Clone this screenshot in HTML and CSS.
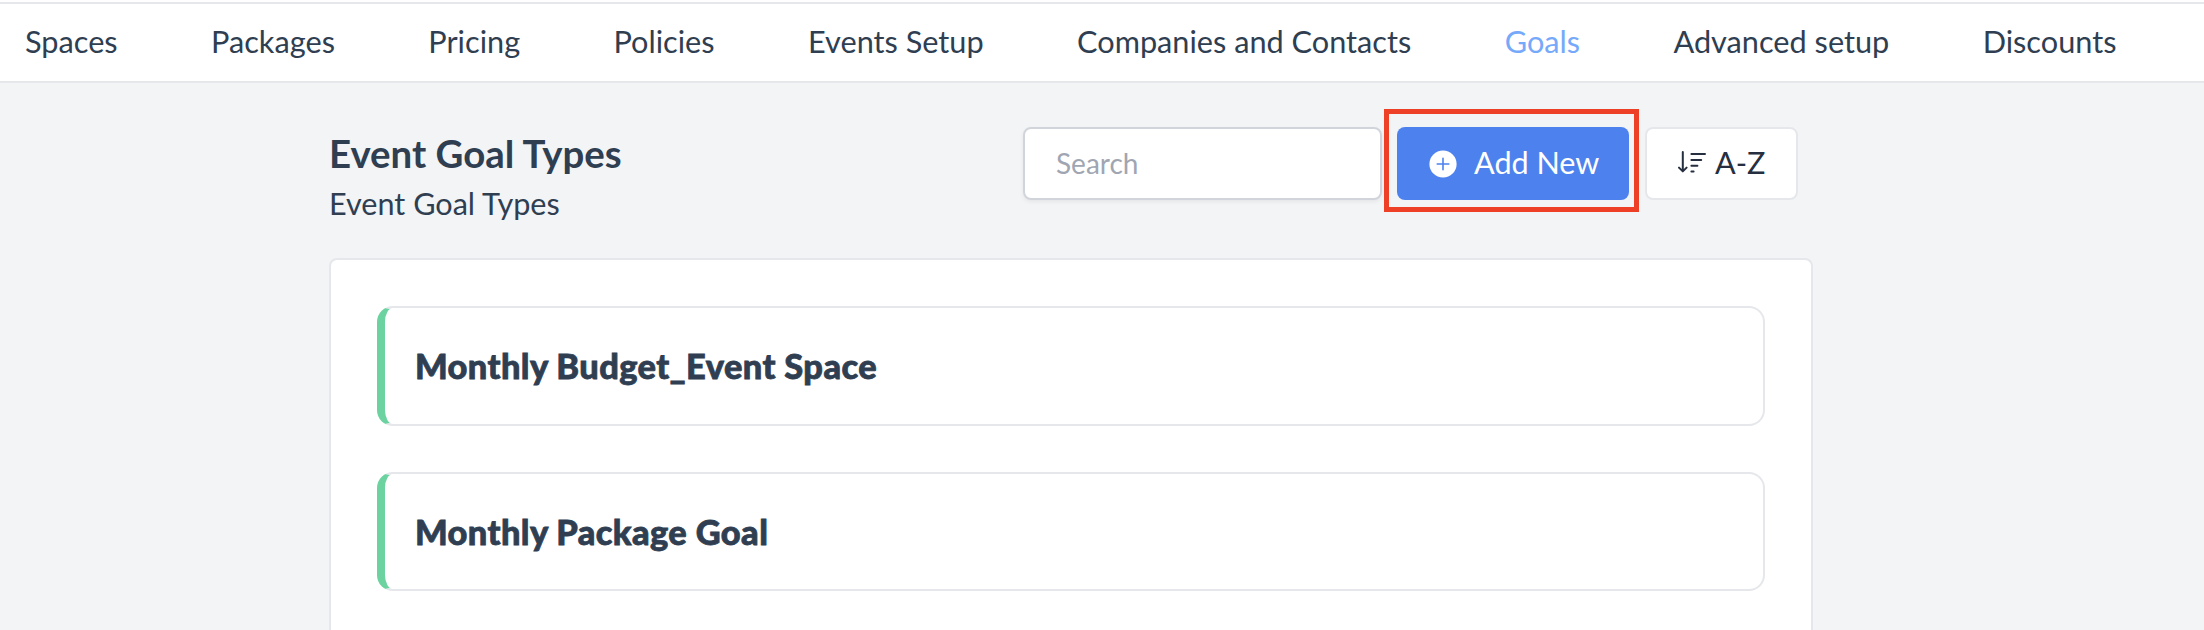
FILE: index.html
```
<!DOCTYPE html>
<html lang="en">

<head>
    <meta charset="UTF-8">
    <meta name="viewport" content="width=device-width, initial-scale=1.0">
    <title>Event Goal Types</title>
    <link rel="stylesheet" href="styles.css">
</head>

<body>
    <nav class="navbar">
        <a class="nav-link">Spaces</a>
        <a class="nav-link">Packages</a>
        <a class="nav-link">Pricing</a>
        <a class="nav-link">Policies</a>
        <a class="nav-link">Events Setup</a>
        <a class="nav-link">Companies and Contacts</a>
        <a class="nav-link active">Goals</a>
        <a class="nav-link">Advanced setup</a>
        <a class="nav-link">Discounts</a>
    </nav>

    <main class="main-container">
        <header class="page-header">
            <div class="heading">
                <h1>Event Goal Types</h1>
                <p>Event Goal Types</p>
            </div>
            <div class="toolbar">
                <input class="search" type="text" placeholder="Search">
                <button class="btn btn-primary">
                    <svg class="icon-plus" viewBox="0 0 28 28">
                        <circle cx="14" cy="14" r="13.6" fill="#fff" />
                        <path d="M14 8.2v11.6M8.2 14h11.6" stroke="#4d82ee" stroke-width="1.6" stroke-linecap="round" />
                    </svg>
                    <span>Add New</span>
                </button>
                <button class="btn btn-sort">
                    <svg class="icon-sort" viewBox="0 0 28 22" fill="none" stroke="currentColor">
                        <path d="M4.8 1v19M1 16.6l3.8 3.8 3.8-3.8" stroke-width="2" stroke-linecap="round" stroke-linejoin="round" />
                        <path d="M13.4 3h13.6M13.4 9h9.8M13.4 14.8h6M13.4 20.4h2.2" stroke-width="2" stroke-linecap="round" />
                    </svg>
                    <span>A-Z</span>
                </button>
            </div>
        </header>

        <section class="card">
            <div class="goal">
                <h2>Monthly Budget_Event Space</h2>
            </div>
            <div class="goal">
                <h2>Monthly Package Goal</h2>
            </div>
        </section>
    </main>
</body>

</html>
```
FILE: styles.css
```
* {
    box-sizing: border-box;
}

body {
    font-family: Lato, "Liberation Sans", sans-serif;
    background-color: #f3f4f6;
    color: #2f3e51;
    margin: 0;
    height: 100vh;
    overflow: hidden;
    display: flex;
    flex-direction: column;
}

.navbar {
    display: flex;
    align-items: center;
    flex-shrink: 0;
    gap: 93.4px;
    height: 81px;
    margin-top: 2px;
    padding-left: 25px;
    padding-bottom: 2px;
    background-color: #fff;
    border-top: 2px solid #e5e7eb;
    border-bottom: 2px solid #e5e7eb;
    box-shadow: 0 -2px 0 #fff;
}

.nav-link {
    font-size: 30.7px;
    white-space: nowrap;
}

.nav-link.active {
    color: #76a9fa;
}

.main-container {
    display: flex;
    flex: 1;
    flex-direction: column;
    width: 1484px;
    margin-left: 329px;
}

.page-header {
    display: flex;
    justify-content: space-between;
    height: 175px;
    padding-top: 44px;
    padding-right: 15px;
}

.heading {
    padding-top: 3px;
}

h1 {
    font-size: 38.4px;
    line-height: 46px;
    margin: 0;
}

.heading p {
    font-size: 30.6px;
    line-height: 48px;
    margin: 4px 0 0;
}

.toolbar {
    display: flex;
    height: 73px;
}

.search {
    width: 359px;
    height: 73px;
    padding: 0 31px 2px;
    font-family: inherit;
    font-size: 28px;
    background-color: #fff;
    border: 2px solid #d1d5db;
    border-radius: 8px;
    box-shadow: 0 2px 4px rgba(0, 0, 0, 0.06);
}

.search::placeholder {
    color: #9fa6b2;
}

.btn {
    display: flex;
    align-items: center;
    height: 73px;
    padding: 0;
    font-family: inherit;
    font-size: 30.6px;
    border: none;
    border-radius: 8px;
}

.btn span {
    margin-top: -3px;
}

.btn-primary {
    position: relative;
    width: 232px;
    margin: 0 16px 0 15px;
    padding-left: 32px;
    gap: 17px;
    background-color: #4d82ee;
    color: #fff;
}

/* red outline around the button */
.btn-primary::after {
    content: "";
    position: absolute;
    top: -18px;
    right: -10px;
    bottom: -12px;
    left: -13px;
    border: 5px solid #ee4026;
}

.icon-plus {
    width: 28px;
    height: 28px;
}

.btn-sort {
    width: 153px;
    padding-left: 31px;
    gap: 9px;
    background-color: #fff;
    color: #252f3f;
    border: 2px solid #e5e7eb;
}

.icon-sort {
    width: 28px;
    height: 22px;
    margin-top: -3px;
}

.card {
    display: flex;
    flex: 1;
    flex-direction: column;
    gap: 46px;
    padding: 46px 46px 0;
    background-color: #fff;
    border: 2px solid #e5e7eb;
    border-bottom: none;
    border-radius: 8px 8px 0 0;
}

.goal {
    display: flex;
    flex-shrink: 0;
    align-items: center;
    height: 119.6px;
    padding-left: 30px;
    border: 2px solid #e5e7eb;
    border-left: 8px solid #6bd2a0;
    border-radius: 16px;
}

h2 {
    font-size: 34.4px;
    font-weight: 900;
    letter-spacing: 0.4px;
    margin: 0;
    -webkit-text-stroke: 0.8px currentColor;
}
```
